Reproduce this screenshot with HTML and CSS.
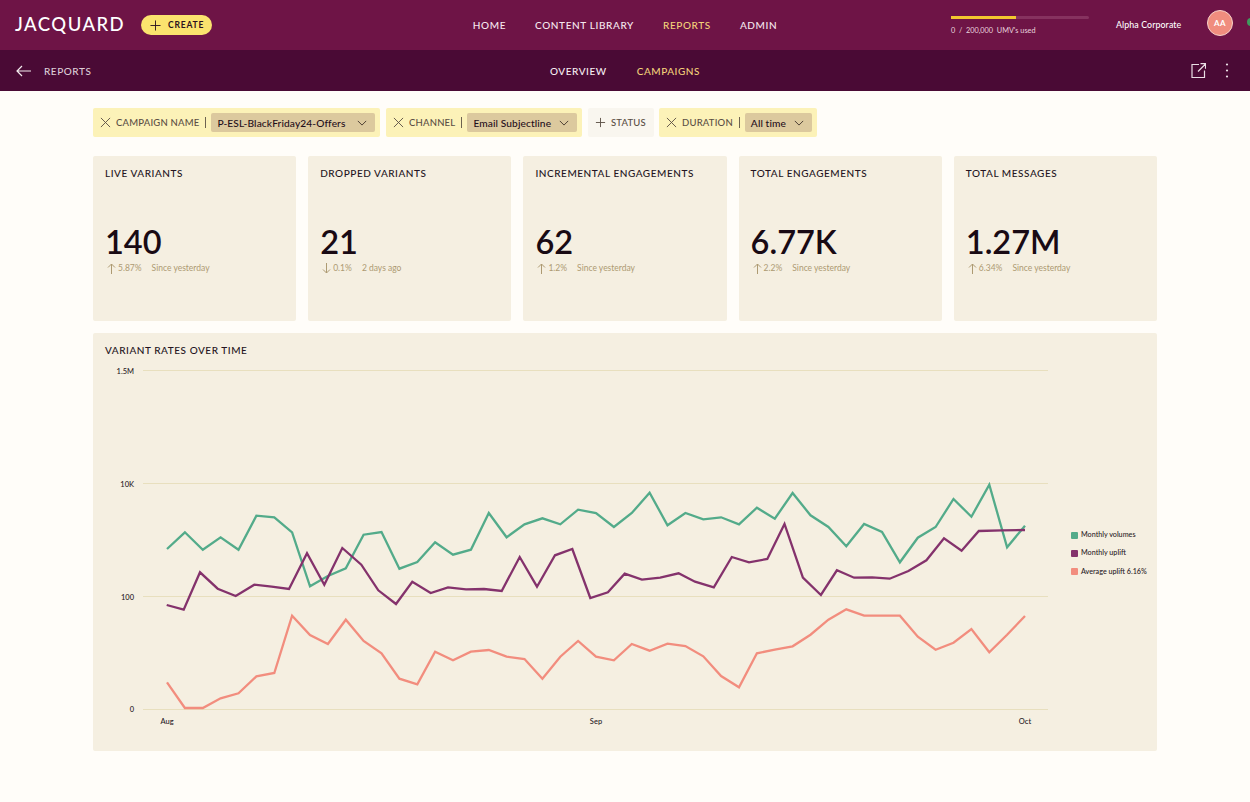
FILE: index.html
```html
<!DOCTYPE html>
<html lang="en">
<head>
<meta charset="utf-8">
<title>Jacquard Reports</title>
<link rel="stylesheet" href="styles.css">
</head>
<body>
<header class="topbar">
  <div class="top-left">
    <span class="logo">JACQUARD</span>
    <button class="create"><svg class="ic12" viewBox="0 0 12 12"><path d="M6 0.5V11.5M0.5 6H11.5"/></svg>CREATE</button>
  </div>
  <nav class="main-nav">
    <a>HOME</a><a>CONTENT LIBRARY</a><a class="active">REPORTS</a><a>ADMIN</a>
  </nav>
  <div class="top-right">
    <div class="usage">
      <div class="usage-track"><div class="usage-fill"></div></div>
      <div class="usage-text">0&nbsp; /&nbsp; 200,000&nbsp; UMV's used</div>
    </div>
    <span class="org">Alpha Corporate</span>
    <span class="avatar">AA</span>
    <span class="status-dot"></span>
  </div>
</header>
<div class="subbar">
  <div class="sub-left">
    <svg class="back" viewBox="0 0 15 12"><path d="M15 6H1M6 1L1 6L6 11"/></svg>
    <span>REPORTS</span>
  </div>
  <nav class="sub-nav"><a>OVERVIEW</a><a class="active">CAMPAIGNS</a></nav>
  <div class="sub-right">
    <svg class="ext" viewBox="0 0 15 15"><path d="M8 1.5H1V14.500H13.500V7.500M7 8.500L14.500 1M9.500 0.700H14.500V5.700"/></svg>
    <svg class="dots" viewBox="0 0 4 15"><circle cx="2" cy="1.500" r="1.100"/><circle cx="2" cy="7.500" r="1.100"/><circle cx="2" cy="13.500" r="1.100"/></svg>
  </div>
</div>
<main class="content">
  <div class="filters">
    <div class="chip on chip-name">
      <svg class="ic12" viewBox="0 0 12 12"><path d="M1 1L11 11M11 1L1 11"/></svg>
      <span class="chip-label">CAMPAIGN NAME</span><span class="sep"></span>
      <span class="select">P-ESL-BlackFriday24-Offers<svg class="chev" viewBox="0 0 12 7"><path d="M1 1L6 6L11 1"/></svg></span>
    </div>
    <div class="chip on chip-channel">
      <svg class="ic12" viewBox="0 0 12 12"><path d="M1 1L11 11M11 1L1 11"/></svg>
      <span class="chip-label">CHANNEL</span><span class="sep"></span>
      <span class="select">Email Subjectline<svg class="chev" viewBox="0 0 12 7"><path d="M1 1L6 6L11 1"/></svg></span>
    </div>
    <div class="chip off chip-status">
      <svg class="ic12" viewBox="0 0 12 12"><path d="M6 1V11M1 6H11"/></svg>
      <span class="chip-label">STATUS</span>
    </div>
    <div class="chip on chip-duration">
      <svg class="ic12" viewBox="0 0 12 12"><path d="M1 1L11 11M11 1L1 11"/></svg>
      <span class="chip-label">DURATION</span><span class="sep"></span>
      <span class="select">All time<svg class="chev" viewBox="0 0 12 7"><path d="M1 1L6 6L11 1"/></svg></span>
    </div>
  </div>
  <section class="metrics">
    <article class="metric"><h2>LIVE VARIANTS</h2><div class="value">140</div><div class="delta"><svg class="arr" viewBox="0 0 9 11"><path d="M4.500 11V1M1 4.500L4.500 1L8 4.500"/></svg><span>5.87%</span><span class="when">Since yesterday</span></div></article>
    <article class="metric"><h2>DROPPED VARIANTS</h2><div class="value">21</div><div class="delta"><svg class="arr" viewBox="0 0 9 11"><path d="M4.500 0V10M1 6.500L4.500 10L8 6.500"/></svg><span>0.1%</span><span class="when">2 days ago</span></div></article>
    <article class="metric"><h2>INCREMENTAL ENGAGEMENTS</h2><div class="value">62</div><div class="delta"><svg class="arr" viewBox="0 0 9 11"><path d="M4.500 11V1M1 4.500L4.500 1L8 4.500"/></svg><span>1.2%</span><span class="when">Since yesterday</span></div></article>
    <article class="metric"><h2>TOTAL ENGAGEMENTS</h2><div class="value">6.77K</div><div class="delta"><svg class="arr" viewBox="0 0 9 11"><path d="M4.500 11V1M1 4.500L4.500 1L8 4.500"/></svg><span>2.2%</span><span class="when">Since yesterday</span></div></article>
    <article class="metric"><h2>TOTAL MESSAGES</h2><div class="value">1.27M</div><div class="delta"><svg class="arr" viewBox="0 0 9 11"><path d="M4.500 11V1M1 4.500L4.500 1L8 4.500"/></svg><span>6.34%</span><span class="when">Since yesterday</span></div></article>
  </section>
  <section class="chart-card">
    <h2>VARIANT RATES OVER TIME</h2>
    <div class="chart-row">
      <svg class="chart" viewBox="105 362 950 380">
        <g class="grid">
          <line x1="143" x2="1048" y1="370.500" y2="370.500"/>
          <line x1="143" x2="1048" y1="483.500" y2="483.500"/>
          <line x1="143" x2="1048" y1="596.500" y2="596.500"/>
          <line x1="143" x2="1048" y1="709.500" y2="709.500"/>
        </g>
        <g class="ylab">
          <text x="134" y="373.500">1.5M</text>
          <text x="134" y="486.500">10K</text>
          <text x="134" y="599.500">100</text>
          <text x="134" y="712">0</text>
        </g>
        <g class="xlab">
          <text x="167" y="724">Aug</text>
          <text x="596" y="724">Sep</text>
          <text x="1025" y="724">Oct</text>
        </g>
        <polyline class="line green" points="167,549 184.900,532.300 202.800,549.700 220.600,537.300 238.500,549.700 256.400,515.700 274.300,517.300 292.100,532.300 310,586.300 327.900,576 345.800,568.300 363.600,534.700 381.500,532 399.400,568.700 417.300,562 435.100,542.300 453,554.700 470.900,549.700 488.800,513 506.600,537.300 524.500,524.300 542.400,518.300 560.300,524.300 578.100,509.700 596,513 613.900,527 631.800,513 649.600,492.700 667.500,525.300 685.400,513 703.300,519.300 721.100,517.300 739,524.300 756.900,507.700 774.800,518.700 792.600,493 810.500,515.300 828.400,527 846.300,546.300 864.100,524 882,532 899.900,562.300 917.800,537.700 935.600,527 953.500,499 971.400,516.700 989.300,484.700 1007.100,547.300 1025,525.700"/>
        <polyline class="line plum" points="166.700,605 183.700,609.700 200,572.300 217.700,588.700 235.700,596 254.300,584.700 271.700,586.700 289,589 307,553.300 324.300,584.700 342.300,548 361.300,564.700 378.300,590.300 396,604 412.300,581.700 430.700,593 448,587.300 466,589.300 484,589 501.700,591 519.700,557 537,586.700 555,555.300 572.300,549 590.300,598 607.900,592.300 624.700,573.700 641.900,579.700 660.200,577.700 678.600,573.300 695,581.700 713.800,587.300 731.800,557 749,562.300 767.300,559 784.500,524 802.900,577.700 820.900,595 836.900,570.300 854.100,577.700 872.100,577.300 889.700,578.700 908.400,571 926.400,560.300 944,538.300 961.600,550.700 978.800,531 1002,530.300 1025,530"/>
        <polyline class="line salmon" points="167,682.300 184.900,708 202.800,708 220.600,698.300 238.500,693.300 256.400,676.300 274.300,673 292.100,615.700 310,635 327.900,644 345.800,619.700 363.600,641 381.500,653.300 399.400,678.700 417.300,684.300 435.100,651.700 453,660.300 470.900,651.700 488.800,650 506.600,656.700 524.500,659 542.400,678.700 560.300,656.700 578.100,641 596,656.700 613.900,660.300 631.800,644 649.600,650.700 667.500,643.700 685.400,646 703.300,656.300 721.100,676 739,687.300 756.900,653.300 774.800,649.700 792.600,646.300 810.500,634.700 828.400,619.700 846.300,609.300 864.100,615.700 882,615.700 899.900,615.700 917.800,636.700 935.600,649.700 953.500,642.700 971.400,629 989.300,652.300 1007.100,634.700 1025,616"/>
      </svg>
      <ul class="legend">
        <li><span class="swatch sw-green"></span>Monthly volumes</li>
        <li><span class="swatch sw-plum"></span>Monthly uplift</li>
        <li><span class="swatch sw-salmon"></span>Average uplift 6.16%</li>
      </ul>
    </div>
  </section>
</main>
</body>
</html>
```

FILE: styles.css
```css
* { box-sizing: border-box; }
html, body { margin: 0; padding: 0; }
body {
  width: 1250px;
  height: 802px;
  overflow: hidden;
  background: #fffdf9;
  color: #1f0d1a;
  font-family: "Lato", "Liberation Sans", sans-serif;
}
a { display: block; }
svg { display: block; fill: none; stroke: currentColor; stroke-width: 1; }

.topbar {
  height: 50px;
  background: #6e1446;
  color: #fff;
  display: grid;
  grid-template-columns: 1fr auto 1fr;
  align-items: center;
  overflow: hidden;
}
.top-left { display: flex; align-items: center; padding-left: 15px; }
.logo { font-size: 18.5px; font-weight: 500; letter-spacing: 1.45px; width: 126px; margin-top: -2px; }
.create {
  display: flex;
  align-items: center;
  gap: 7px;
  height: 20px;
  width: 71px;
  padding: 0 0 0 9px;
  border: 0;
  border-radius: 10px;
  background: #fbe36e;
  color: #2a1020;
  font: 700 8.5px "Lato", sans-serif;
  letter-spacing: 0.8px;
}
.ic12 { width: 11px; height: 11px; flex: none; }

.main-nav { display: flex; gap: 29px; margin-top: -1px; font-size: 10px; font-weight: 500; letter-spacing: 0.62px; color: #f6e8ef; }
.main-nav .active, .sub-nav .active { color: #f2d27a; }

.top-right { display: flex; align-items: center; justify-content: flex-end; position: relative; height: 50px; }
.usage { width: 138px; margin-right: 27px; }
.usage-track { height: 3px; border-radius: 2px; background: #86325f; }
.usage-fill { width: 47%; height: 3px; background: #f2c72f; }
.usage-text { margin-top: 7px; font-size: 7.3px; color: #e9d5df; }
.org { font-size: 8.800px; font-weight: 500; width: 91px; margin-top: -2px; letter-spacing: 0.1px; }
.avatar {
  width: 26px;
  height: 26px;
  margin-top: -4px;
  margin-right: 17px;
  border-radius: 50%;
  border: 1px solid #f7d3c9;
  background: #f08d7e;
  color: #fff;
  font-size: 8px;
  font-weight: 700;
  display: flex;
  align-items: center;
  justify-content: center;
  letter-spacing: 0.4px;
}
.status-dot {
  position: absolute;
  left: calc(100% - 3px);
  top: 18px;
  width: 8px;
  height: 8px;
  border-radius: 50%;
  background: #3f9a5e;
}

.subbar {
  height: 41px;
  background: #4a0a35;
  color: #eadfe5;
  display: grid;
  grid-template-columns: 1fr auto 1fr;
  align-items: center;
}
.sub-left { display: flex; align-items: center; gap: 13px; padding-left: 16px; font-size: 10px; font-weight: 500; letter-spacing: 0.55px; color: #dccdd6; }
.back { width: 15px; height: 12px; stroke-width: 1.2; color: #f4ecef; }
.sub-nav { display: flex; gap: 30px; font-size: 10px; font-weight: 500; letter-spacing: 0.55px; color: #f6eef2; }
.sub-right { display: flex; align-items: center; justify-content: flex-end; padding-right: 21px; gap: 19px; }
.ext { width: 15px; height: 15px; margin-top: -1px; stroke-width: 1.2; }
.dots { width: 4px; height: 15px; fill: currentColor; stroke: none; margin-top: -1px; }

.content { padding: 17px 93px 0; }
.filters { display: flex; gap: 6px; height: 29px; }
.chip {
  display: flex;
  flex: none;
  align-items: center;
  height: 29px;
  padding: 0 5px 0 7px;
  border-radius: 2px;
  font-size: 9.500px;
  letter-spacing: 0.2px;
  color: #5b4f45;
}
.chip-name { width: 287px; }
.chip-channel { width: 196px; }
.chip-status { width: 66px; margin-right: -1px; }
.chip-duration { width: 158px; }
.chip.on { background: #fcf2b8; }
.chip.off { background: #f9f6ef; }
.chip-label { margin-left: 5px; font-weight: 500; white-space: nowrap; }
.sep { width: 1px; height: 11px; background: #6d6250; margin: 0 5px 0 6px; flex: none; }
.select {
  display: flex;
  flex: 1;
  align-items: center;
  justify-content: space-between;
  height: 19px;
  padding: 0 8px 0 6px;
  border-radius: 2px;
  background: #dcc99e;
  color: #1f0d1a;
  font-family: "Lato Medium", "Lato", sans-serif;
  font-weight: 500;
  font-size: 10.200px;
  letter-spacing: 0.1px;
  white-space: nowrap;
}
.chev { width: 10px; height: 6px; color: #33251f; flex: none; }

.metrics {
  display: grid;
  grid-template-columns: repeat(5, 1fr);
  gap: 12px;
  margin-top: 19px;
}
.metric {
  height: 165px;
  padding: 10px 12px 0;
  background: #f5efe1;
  border-radius: 2px;
}
h2 { margin: 0; font-family: "Lato Medium", "Lato", sans-serif; font-size: 10px; line-height: 14px; font-weight: 500; letter-spacing: 0.55px; color: #241421; }
.value { margin-top: 40px; font-family: "Lato Semibold", "Lato Medium", "Lato", sans-serif; font-size: 32.500px; line-height: 44px; font-weight: 600; color: #190a14; }
.delta {
  display: flex;
  align-items: center;
  gap: 2px;
  margin-top: -3px;
  height: 14px;
  font-size: 8.500px;
  color: #ad9a72;
  white-space: nowrap;
}
.arr { width: 9px; height: 11px; margin-left: 2px; }
.when { margin-left: 8px; }

.chart-card {
  height: 418px;
  margin-top: 12px;
  padding: 10px 0 0 12px;
  background: #f5efe1;
  border-radius: 2px;
}
.chart-row { display: flex; margin-top: 5px; }
.chart { width: 950px; height: 380px; flex: none; }
.grid line { stroke: #e8dfbe; stroke-width: 1; }
.ylab text, .xlab text { fill: #2a1a26; stroke: none; font-size: 7.500px; font-weight: 500; }
.ylab text { text-anchor: end; }
.xlab text { text-anchor: middle; }
.line { fill: none; stroke-width: 2.300; stroke-linejoin: miter; }
.green { stroke: #53ab8a; }
.plum { stroke: #84326c; }
.salmon { stroke: #f28d7e; }

.legend {
  list-style: none;
  margin: 0;
  padding: 168px 0 0 16px;
  display: flex;
  flex-direction: column;
  gap: 8.400px;
  font-size: 7.200px;
  font-weight: 500;
  color: #2a1a26;
}
.legend li { display: flex; align-items: center; gap: 3px; line-height: 10px; white-space: nowrap; }
.swatch { width: 7px; height: 7px; border-radius: 1px; flex: none; }
.sw-green { background: #53ab8a; }
.sw-plum { background: #84326c; }
.sw-salmon { background: #f28d7e; }
```
